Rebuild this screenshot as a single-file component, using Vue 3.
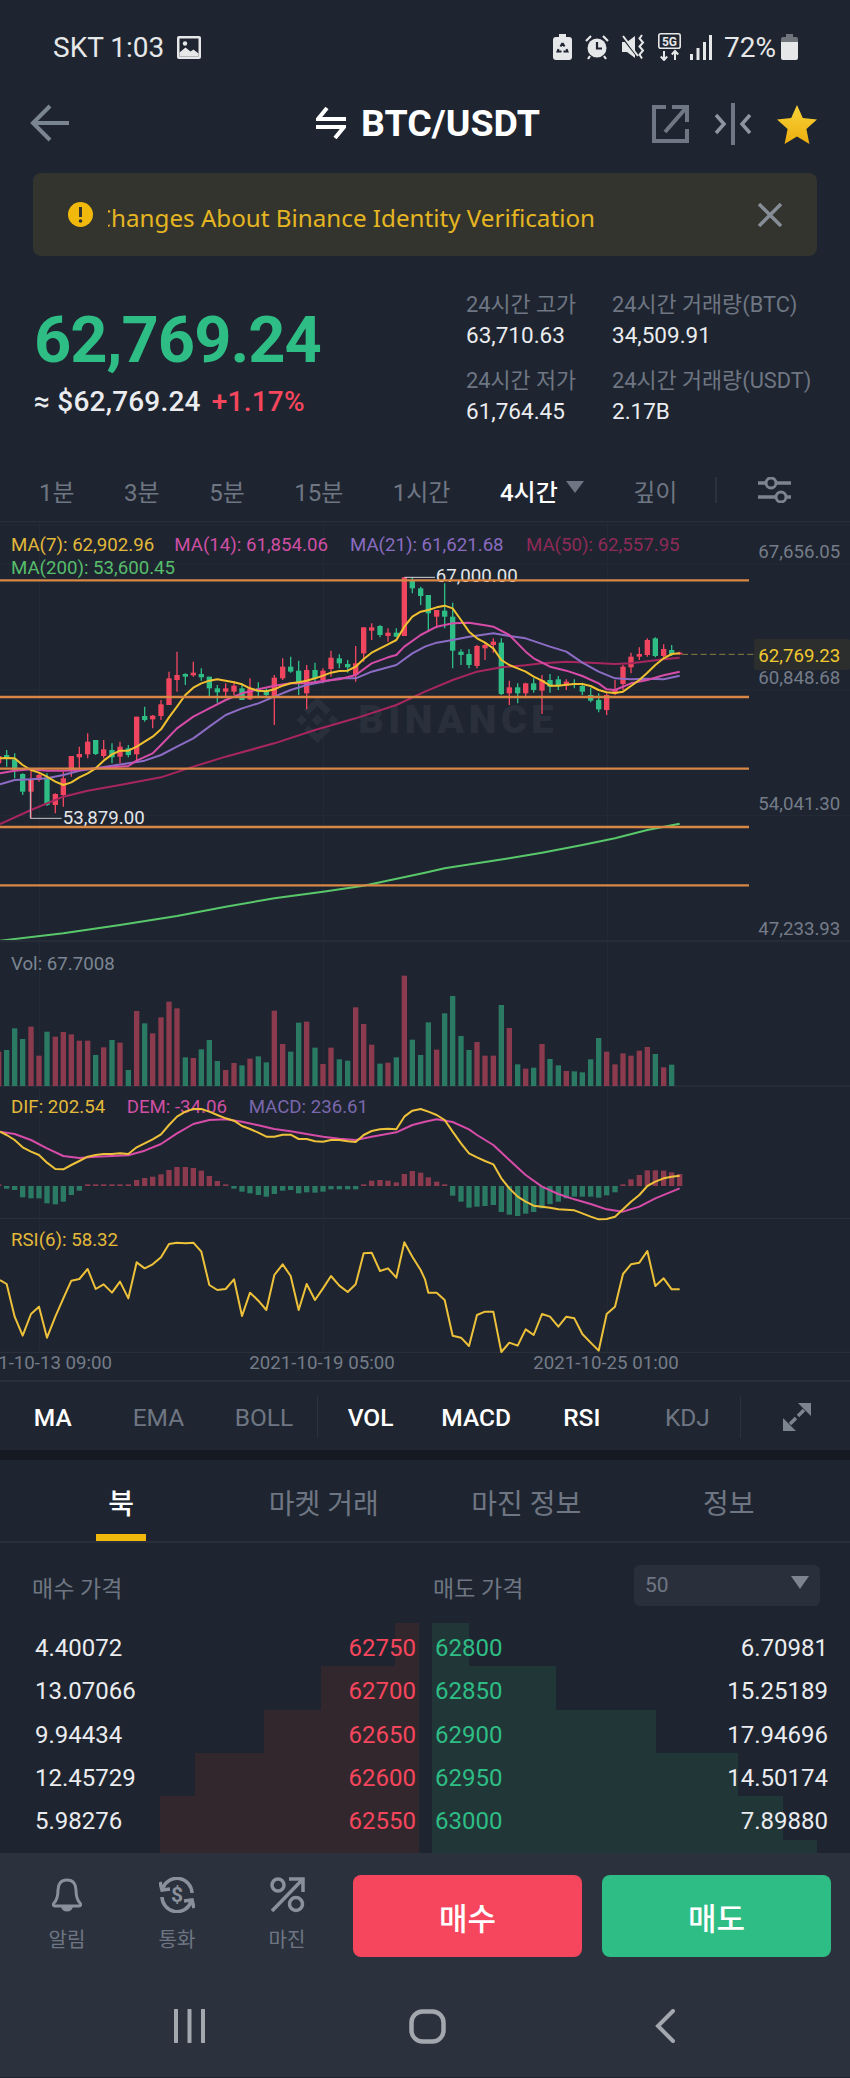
<script setup>
const off = 1275

// all chart coordinates are 3x screen pixels, a right-half x is stored minus 1275
const join = (left, right) => [...left, ...right.map(p => [p[0] + off, ...p.slice(1)])]
const line = pts => pts.map(p => p[0] + ',' + p[1]).join(' ')

const candles = join([
  [-4,700,740,708,730,'r'],[20,690,740,705,715,'g'],[44,700,775,718,750,'g'],[68,760,825,762,815,'g'],
  [93,750,895,780,815,'r'],[117,760,785,765,780,'r'],[141,760,858,772,855,'g'],[166,820,880,822,855,'r'],
  [190,755,860,775,825,'r'],[214,708,770,708,750,'r'],[238,680,745,702,712,'r'],[263,640,715,665,703,'r'],
  [287,660,705,660,702,'g'],[311,660,715,688,708,'r'],[336,670,730,690,712,'g'],[360,665,730,680,710,'r'],
  [385,675,712,685,705,'g'],[410,590,720,590,703,'r'],[434,560,605,588,600,'g'],[458,585,625,587,598,'r'],
  [483,540,600,553,588,'r'],[507,455,555,475,555,'r'],[531,395,515,465,480,'r'],[556,460,495,462,470,'g'],
  [580,425,470,458,466,'r'],[604,445,482,462,472,'g'],[628,470,530,470,505,'g'],[652,495,548,505,517,'g'],
  [677,490,530,505,515,'r'],[702,483,525,497,515,'r'],[726,490,540,505,540,'g'],[750,475,540,505,538,'r'],
  [775,487,530,505,515,'g'],[799,505,535,510,525,'g'],[823,465,615,473,530,'r'],[848,415,480,440,475,'r'],
  [872,410,458,440,455,'g'],[896,422,525,452,490,'g'],[920,435,568,450,520,'r'],[945,428,490,450,475,'g'],
  [969,445,490,452,480,'r'],[993,392,470,413,447,'r'],[1018,403,445,415,430,'g'],[1043,420,458,432,442,'g'],
  [1067,378,485,430,465,'r'],[1091,322,425,322,400,'r'],[1115,310,360,322,332,'r'],[1140,315,352,318,345,'g'],
  [1164,325,365,338,348,'r'],[1189,325,352,338,350,'g'],[1213,172,348,172,348,'r'],[1237,172,220,180,205,'g'],
  [1262,200,255,205,228,'g']
], [
  [10,225,335,225,280,'g'],[35,270,325,270,290,'r'],[59,190,325,272,290,'g'],[83,248,445,290,392,'g'],
  [108,388,435,395,405,'g'],[132,388,445,402,435,'g'],[156,375,445,378,438,'r'],[180,368,420,375,385,'r'],
  [205,355,398,365,375,'r'],[229,355,525,368,522,'g'],[253,482,555,502,520,'r'],[278,490,550,502,520,'g'],
  [302,488,535,490,520,'r'],[326,475,518,490,510,'g'],[351,465,582,480,512,'r'],[375,462,518,480,500,'g'],
  [400,468,510,478,497,'g'],[424,478,510,485,497,'r'],[448,478,505,490,495,'g'],[472,488,525,498,515,'g'],
  [497,503,547,525,542,'g'],[521,520,577,540,568,'g'],[545,520,585,525,570,'r'],[570,480,525,510,522,'r'],
  [594,435,510,440,492,'r'],[618,398,460,410,442,'r'],[643,382,420,402,410,'r'],[667,355,410,360,405,'r'],
  [691,352,412,355,408,'g'],[716,373,415,387,408,'r'],[740,375,408,390,402,'g'],[764,395,405,398,403,'r']
])

const ma7 = line(join([
  [0,715],[20,714],[44,715],[68,735],[93,750],[117,758],[141,770],[166,785],[190,795],[214,787],[238,772],[263,760],
  [287,745],[311,722],[336,703],[360,692],[385,692],[410,680],[434,665],[458,650],[483,628],[507,592],[531,560],
  [556,525],[580,503],[604,490],[628,482],[652,478],[677,482],[702,487],[726,493],[750,505],[775,512],[799,514],
  [823,508],[848,497],[872,490],[896,487],[920,482],[945,475],[969,467],[993,458],[1018,453],[1043,452],[1067,440],
  [1091,417],[1115,398],[1140,385],[1164,373],[1189,360],[1213,320],[1237,290],[1262,275]
], [
  [10,270],[35,262],[59,257],[83,265],[108,300],[132,335],[156,355],[180,368],[205,385],[229,420],[253,435],[278,445],
  [302,455],[326,470],[351,482],[375,497],[400,497],[424,494],[448,492],[472,492],[497,498],[521,510],[545,517],
  [570,519],[594,515],[618,498],[643,480],[667,458],[691,435],[716,415],[740,402],[764,400]
]))
const ma14 = line(join([
  [0,760],[44,752],[93,748],[141,752],[190,752],[238,750],[287,745],[336,742],[385,738],[410,722],[458,700],[483,675],
  [531,625],[580,590],[628,565],[677,540],[726,520],[775,508],[823,497],[872,490],[920,490],[969,483],[1018,478],
  [1067,465],[1115,430],[1164,412],[1189,405],[1213,380],[1262,345]
], [
  [35,320],[83,310],[132,308],[180,316],[205,320],[253,345],[302,395],[326,415],[375,440],[424,452],[472,468],[521,490],
  [545,508],[570,510],[618,490],[667,480],[716,466],[764,455]
]))
const ma21 = line(join([
  [0,793],[44,780],[93,778],[141,775],[190,765],[238,752],[287,745],[336,737],[385,730],[434,722],[483,705],[531,680],
  [580,655],[628,620],[677,585],[726,565],[775,550],[823,530],[872,510],[920,495],[969,485],[1018,475],[1067,475],
  [1115,455],[1189,435],[1237,400],[1275,380]
], [
  [35,368],[83,360],[132,350],[205,340],[253,348],[302,355],[375,380],[424,395],[472,428],[521,455],[570,475],[618,478],
  [667,476],[716,478],[764,467]
]))
const ma50 = line(join([
  [0,912],[93,870],[190,830],[263,812],[360,795],[483,772],[580,740],[677,710],[823,670],[945,630],[1067,595],[1189,555],
  [1275,515]
], [
  [83,480],[156,455],[229,442],[302,436],[351,430],[424,425],[497,428],[570,432],[618,430],[716,418],[764,413]
]))
const ma200 = line(join([
  [0,1262],[190,1240],[360,1215],[531,1188],[677,1160],[823,1135],[969,1115],[1091,1097],[1275,1058]
], [
  [59,1045],[156,1030],[253,1015],[351,998],[472,975],[570,955],[667,930],[764,911]
]))

const levels = [181, 531, 746, 921, 1096]
const gridA = [15, 132, 510, 886, 1263]
const axis = [
  { text: '67,656.05', y: 95 },
  { text: '60,848.68', y: 472 },
  { text: '54,041.30', y: 850 },
  { text: '47,233.93', y: 1225 }
]
const legend = [
  { text: 'MA(7): 62,902.96', x: 33, y: 72, color: '#e3b93a' },
  { text: 'MA(14): 61,854.06', x: 523, y: 72, color: '#cf4fa4' },
  { text: 'MA(21): 61,621.68', x: 1050, y: 72, color: '#8a6cc0' },
  { text: 'MA(50): 62,557.95', x: 1578, y: 72, color: '#8e2a58' },
  { text: 'MA(200): 53,600.45', x: 33, y: 142, color: '#57bd6b' }
]

// bar tops of the volume panel, bottom edge is 438
const vol = join([
  [-4,335,'r'],[20,330,'g'],[44,265,'g'],[68,297,'g'],[93,260,'r'],[117,347,'r'],[141,275,'g'],[166,290,'r'],[190,276,'r'],
  [214,283,'r'],[238,302,'r'],[263,302,'r'],[287,345,'g'],[311,322,'r'],[336,300,'g'],[360,308,'r'],[385,390,'g'],
  [410,213,'r'],[434,250,'g'],[458,280,'r'],[483,232,'r'],[507,185,'r'],[531,205,'r'],[556,352,'g'],[580,354,'r'],
  [604,328,'g'],[628,300,'g'],[652,363,'g'],[677,390,'r'],[702,369,'r'],[726,376,'g'],[750,356,'r'],[775,349,'g'],
  [799,367,'g'],[823,212,'r'],[848,312,'r'],[872,335,'g'],[896,248,'g'],[920,245,'r'],[945,323,'g'],[969,372,'r'],
  [993,323,'r'],[1018,358,'g'],[1043,362,'g'],[1067,202,'r'],[1091,252,'r'],[1115,314,'r'],[1140,371,'g'],[1164,368,'r'],
  [1189,352,'g'],[1213,107,'r'],[1237,299,'g'],[1262,345,'g']
], [
  [10,247,'g'],[35,329,'r'],[59,220,'g'],[83,168,'g'],[108,288,'g'],[132,330,'g'],[156,306,'r'],[180,347,'r'],[205,347,'r'],
  [229,195,'g'],[253,264,'r'],[278,373,'g'],[302,386,'r'],[326,383,'g'],[351,312,'r'],[375,357,'g'],[400,376,'g'],
  [424,393,'r'],[448,394,'g'],[472,397,'g'],[497,358,'g'],[521,294,'g'],[545,335,'r'],[570,373,'r'],[594,340,'r'],
  [618,347,'r'],[643,332,'r'],[667,321,'r'],[691,342,'g'],[716,382,'r'],[740,374,'g']
])

// far end of each histogram bar, zero line is 738
const hist = join([
  [-4,733],[20,746],[44,750],[68,772],[93,775],[117,775],[141,790],[166,793],[190,785],[214,765],[238,752],[263,733],
  [287,733],[311,733],[336,733],[360,733],[385,733],[410,720],[434,714],[458,710],[483,703],[507,690],[531,681],[556,681],
  [580,684],[604,692],[628,708],[652,723],[677,733],[702,746],[726,755],[750,760],[775,765],[799,770],[823,762],[848,752],
  [872,750],[896,760],[920,757],[945,758],[969,755],[993,748],[1018,748],[1043,748],[1067,748],[1091,733],[1115,722],
  [1140,720],[1164,722],[1189,727],[1213,702],[1237,693],[1262,698]
], [
  [10,712],[35,725],[59,733],[83,767],[108,785],[132,803],[156,800],[180,798],[205,795],[229,816],[253,824],[278,828],
  [302,821],[326,816],[351,805],[375,792],[400,785],[424,775],[448,770],[472,770],[497,770],[521,773],[545,766],[570,757],
  [594,733],[618,718],[643,705],[667,691],[691,691],[716,692],[740,697],[764,702]
])

const dif = line(join([
  [0,575],[20,585],[44,600],[68,622],[93,635],[117,645],[141,668],[166,687],[190,688],[214,675],[238,663],[263,650],
  [287,645],[311,642],[336,642],[360,640],[385,642],[410,622],[434,610],[458,598],[483,583],[507,555],[531,530],[556,515],
  [580,507],[604,507],[628,515],[652,525],[677,535],[702,542],[726,558],[750,567],[775,578],[799,590],[823,590],[848,584],
  [872,584],[896,597],[920,597],[945,604],[969,605],[993,600],[1018,600],[1043,604],[1067,606],[1091,585],[1115,573],
  [1140,568],[1164,566],[1189,568],[1213,530],[1237,512],[1262,507]
], [
  [10,515],[35,525],[59,540],[83,575],[108,610],[132,640],[156,652],[180,663],[205,673],[229,715],[253,745],[278,770],
  [302,785],[326,797],[351,800],[375,803],[400,808],[424,809],[448,811],[472,820],[497,830],[521,838],[545,837],[570,830],
  [594,808],[618,785],[643,765],[667,738],[691,725],[716,715],[740,710],[764,707]
]))
const dem = line(join([
  [0,575],[44,582],[93,600],[141,625],[190,648],[238,654],[287,650],[336,648],[385,646],[434,632],[483,612],[531,580],
  [580,552],[628,540],[677,538],[726,545],[775,556],[823,567],[872,574],[920,582],[969,590],[1018,596],[1067,600],
  [1115,590],[1189,577],[1237,555],[1275,545]
], [
  [35,538],[83,546],[132,568],[156,585],[205,615],[253,660],[302,705],[351,740],[400,762],[448,778],[497,792],[545,808],
  [594,815],[643,800],[691,775],[764,745]
]))
const rsi = line(join([
  [0,1020],[20,1032],[44,1130],[68,1187],[93,1122],[117,1100],[141,1193],[166,1130],[190,1075],[214,1022],[238,1017],
  [263,987],[287,1047],[311,1033],[336,1058],[360,1025],[385,1075],[410,967],[434,985],[458,973],[483,952],[507,912],
  [531,908],[556,910],[580,908],[604,935],[628,1035],[652,1050],[677,1047],[702,1018],[726,1128],[750,1058],[775,1082],
  [799,1110],[823,1005],[848,973],[872,1008],[896,1110],[920,1032],[945,1080],[969,1045],[993,1008],[1018,1037],
  [1043,1056],[1067,1033],[1091,940],[1115,938],[1140,993],[1164,985],[1189,1013],[1213,907],[1237,950],[1262,990]
], [
  [0,1018],[10,1058],[35,1058],[59,1080],[83,1187],[108,1193],[132,1218],[156,1125],[180,1115],[205,1115],[229,1236],
  [253,1208],[278,1217],[302,1168],[326,1185],[351,1122],[375,1130],[400,1160],[424,1130],[448,1135],[472,1182],
  [497,1208],[521,1232],[545,1122],[570,1100],[594,1002],[618,973],[643,968],[667,933],[691,1038],[716,1015],
  [740,1048],[764,1048]
]))

const gridX = [118, 970, 1822]
const stamps = [
  { text: '2021-10-13 09:00', x: 118 },
  { text: '2021-10-19 05:00', x: 966 },
  { text: '2021-10-25 01:00', x: 1818 }
]

const frames = ['1분', '3분', '5분', '15분', '1시간']
const indicatorsA = [
  { name: 'MA', on: true },
  { name: 'EMA', on: false },
  { name: 'BOLL', on: false }
]
const indicatorsB = [
  { name: 'VOL', on: true },
  { name: 'MACD', on: true },
  { name: 'RSI', on: true },
  { name: 'KDJ', on: false }
]
const tabs = ['북', '마켓 거래', '마진 정보', '정보']

const rows = [
  { bid: '4.40072', bidPrice: '62750', askPrice: '62800', ask: '6.70981', bidDepth: 24, askDepth: 37 },
  { bid: '13.07066', bidPrice: '62700', askPrice: '62850', ask: '15.25189', bidDepth: 98, askDepth: 124 },
  { bid: '9.94434', bidPrice: '62650', askPrice: '62900', ask: '17.94696', bidDepth: 155, askDepth: 224 },
  { bid: '12.45729', bidPrice: '62600', askPrice: '62950', ask: '14.50174', bidDepth: 224, askDepth: 306 },
  { bid: '5.98276', bidPrice: '62550', askPrice: '63000', ask: '7.89880', bidDepth: 259, askDepth: 351 },
  { bid: '', bidPrice: '', askPrice: '', ask: '', bidDepth: 259, askDepth: 385 }
]
</script>

<template>
  <div class="phone">
    <div class="status">
      <div class="status-left">
        <span>SKT 1:03</span>
        <svg width="24" height="23" viewBox="0 0 24 23">
          <rect width="24" height="23" rx="2" fill="#e6e7e8" />
          <rect x="2.5" y="2.5" width="19" height="18" fill="#1e2530" />
          <path d="M2.5 20.5v-4l6-5 5 4 3-2 5 4v3z" fill="#e6e7e8" />
          <circle cx="8" cy="7.5" r="2.2" fill="#e6e7e8" />
        </svg>
      </div>
      <div class="status-right">
        <svg class="s-recycle" width="19" height="26" viewBox="0 0 19 26">
          <path d="M6 0h7v3h3a3 3 0 0 1 3 3v17a3 3 0 0 1-3 3H3a3 3 0 0 1-3-3V6a3 3 0 0 1 3-3h3z" fill="#e6e7e8" />
          <path d="M9.5 9l2 3.4M9.5 9l-2 3.4M5.5 15l-1 2.5h4M13.5 15l1 2.5h-4" stroke="#1e2530" stroke-width="2" fill="none" />
        </svg>
        <svg class="s-alarm" width="26" height="26" viewBox="0 0 26 26">
          <circle cx="13" cy="14" r="9.5" fill="#e6e7e8" />
          <path d="M13 8v6.5h5" stroke="#1e2530" stroke-width="2.2" fill="none" />
          <path d="M2 7l5-5M24 7l-5-5M6 22l-2 3M20 22l2 3" stroke="#e6e7e8" stroke-width="2.2" fill="none" />
        </svg>
        <svg class="s-mute" width="25" height="26" viewBox="0 0 25 26">
          <path d="M1 8h5l8-6v22l-8-6H1z" fill="#e6e7e8" />
          <path d="M1 3l15 19" stroke="#1e2530" stroke-width="2" />
          <path d="M2 2l15 20" stroke="#e6e7e8" stroke-width="2" />
          <path d="M21 1l-2.500 3.500 3.500 4-3.500 4 3.500 4-3.500 4 2.500 4" stroke="#e6e7e8" stroke-width="2" fill="none" />
        </svg>
        <svg class="s-5g" width="23" height="28" viewBox="0 0 23 28">
          <rect x="0.800" y="0.800" width="21.400" height="14.400" rx="2" fill="none" stroke="#e6e7e8" stroke-width="1.600" />
          <text x="11.500" y="12.500" text-anchor="middle" class="s-5g-text">5G</text>
          <path d="M6 18v9M2.800 23.500L6 27l3.200-3.500M17 27v-9M13.800 21.500L17 18l3.200 3.500" stroke="#e6e7e8" stroke-width="2" fill="none" />
        </svg>
        <svg class="s-signal" width="22" height="25" viewBox="0 0 22 25">
          <rect x="0" y="19" width="3" height="6" fill="#e6e7e8" />
          <rect x="6.500" y="13" width="3" height="12" fill="#e6e7e8" />
          <rect x="13" y="7" width="3" height="18" fill="#e6e7e8" />
          <rect x="19" y="0" width="3" height="25" fill="#e6e7e8" />
        </svg>
        <span class="s-pct">72%</span>
        <svg width="17" height="26" viewBox="0 0 17 26">
          <path d="M5 0h7v3h3a2 2 0 0 1 2 2v3H0V5a2 2 0 0 1 2-2h3z" fill="#70757c" />
          <path d="M0 8h17v16a2 2 0 0 1-2 2H2a2 2 0 0 1-2-2z" fill="#e6e7e8" />
        </svg>
      </div>
    </div>

    <div class="nav">
      <svg class="back" width="40" height="38" viewBox="0 0 40 38">
        <path d="M39 19H3M20 2L3 19l17 17" stroke="#7a8591" stroke-width="4" fill="none" />
      </svg>
      <div class="pair">
        <svg width="30" height="32" viewBox="0 0 30 32">
          <path d="M30 12H2L11 1M0 20h28L19 31" stroke="#fff" stroke-width="4" fill="none" />
        </svg>
        <span>BTC/USDT</span>
      </div>
      <div class="nav-tools">
        <svg width="37" height="38" viewBox="0 0 37 38">
          <path d="M14 2H2v34h33V24M34 3L13 27M20 2h15v15" stroke="#6f7784" stroke-width="4" fill="none" />
        </svg>
        <svg class="split" width="38" height="42" viewBox="0 0 38 42">
          <path d="M19 0v42" stroke="#6f7784" stroke-width="4" />
          <path d="M2 12l8 9-8 9M36 12l-8 9 8 9" stroke="#8c95a1" stroke-width="3.500" fill="none" />
        </svg>
        <svg class="star" width="40" height="39" viewBox="0 0 40 39">
          <defs>
            <linearGradient id="starFill" x1="0" y1="0" x2="0" y2="1">
              <stop offset="0" stop-color="#f8d33a" />
              <stop offset="1" stop-color="#edae0d" />
            </linearGradient>
          </defs>
          <path d="M20 0l5.800 13 14.200 1.500-10.600 9.500 3 15L20 31.500 7.600 39l3-15L0 14.500 14.200 13z" fill="url(#starFill)" />
        </svg>
      </div>
    </div>

    <div class="notice">
      <svg width="25" height="25" viewBox="0 0 25 25">
        <circle cx="12.500" cy="12.500" r="12.500" fill="#f0b90b" />
        <path d="M12.500 5v10" stroke="#33342d" stroke-width="3" />
        <circle cx="12.500" cy="19" r="1.800" fill="#33342d" />
      </svg>
      <div class="notice-clip"><span>Changes About Binance Identity Verification</span></div>
      <svg class="notice-close" width="24" height="24" viewBox="0 0 24 24">
        <path d="M1 1l22 22M23 1L1 23" stroke="#868d96" stroke-width="3.500" />
      </svg>
    </div>

    <div class="ticker">
      <div class="ticker-main">
        <div class="price">62,769.24</div>
        <div class="fiat">≈ $62,769.24 <span>+1.17%</span></div>
      </div>
      <div class="stats">
        <div class="stat-label">24시간 고가</div>
        <div class="stat-label">24시간 거래량(BTC)</div>
        <div class="stat-value">63,710.63</div>
        <div class="stat-value">34,509.91</div>
        <div class="stat-label second">24시간 저가</div>
        <div class="stat-label second">24시간 거래량(USDT)</div>
        <div class="stat-value">61,764.45</div>
        <div class="stat-value">2.17B</div>
      </div>
    </div>

    <div class="frames">
      <span v-for="f in frames" :key="f">{{ f }}</span>
      <span class="frame-on">4시간<i class="frame-arrow"></i></span>
      <span>깊이</span>
      <b class="frame-div"></b>
      <svg width="33" height="26" viewBox="0 0 33 26">
        <path d="M0 6h33M0 20h33" stroke="#7c8490" stroke-width="3.500" />
        <circle cx="13" cy="6" r="5" fill="#1e2530" stroke="#7c8490" stroke-width="3" />
        <circle cx="23" cy="20" r="5" fill="#1e2530" stroke="#7c8490" stroke-width="3" />
      </svg>
    </div>

    <svg class="chart-a" width="850" height="420" viewBox="0 0 2550 1260">
      <line x1="0" y1="5" x2="2550" y2="5" stroke="#2a303b" stroke-width="4" />
      <line v-for="y in gridA" :key="y" x1="0" :y1="y" x2="2550" :y2="y" class="grid" />
      <line v-for="x in gridX" :key="x" :x1="x" y1="5" :x2="x" y2="1260" class="grid" />

      <g fill="#2a303b">
        <g transform="translate(952 600)">
          <path d="M0-70L40-30 26-16 0-42-26-16-40-30zM0 70L40 30 26 16 0 42-26 16-40 30zM0-17L17 0 0 17-17 0zM-47-15L-32 0-47 15-62 0zM47-15L62 0 47 15 32 0z" />
        </g>
        <text x="1075" y="640" class="mark" textLength="585">BINANCE</text>
      </g>

      <g v-for="c in candles" :key="c[0]" :fill="c[5] === 'r' ? '#f0455f' : '#2ebd85'" :stroke="c[5] === 'r' ? '#f0455f' : '#2ebd85'">
        <line :x1="c[0]" :y1="c[1]" :x2="c[0]" :y2="c[2]" stroke-width="4" />
        <rect :x="c[0] - 8" :y="c[3]" width="16" :height="c[4] - c[3]" stroke="none" />
      </g>

      <polyline :points="ma50" class="ma" stroke="#a8265f" />
      <polyline :points="ma21" class="ma" stroke="#8c6cc4" />
      <polyline :points="ma14" class="ma" stroke="#d64ca8" />
      <polyline :points="ma7" class="ma" stroke="#f0c030" />
      <polyline :points="ma200" class="ma" stroke="#58c86a" />

      <path d="M1213 172H1305" stroke="#d4d6da" stroke-width="3" fill="none" />
      <text x="1307" y="185" class="mark-price">67,000.00</text>
      <path d="M91 780V895H185" stroke="#c4c7cc" stroke-width="3" fill="none" />
      <text x="188" y="913" class="mark-price">53,879.00</text>

      <line v-for="y in levels" :key="y" x1="0" :y1="y" x2="2247" :y2="y" stroke="#d98744" stroke-width="7" />

      <text v-for="l in legend" :key="l.text" :x="l.x" :y="l.y + 20" :fill="l.color" class="chart-text">{{ l.text }}</text>
      <text v-for="a in axis" :key="a.text" x="2275" :y="a.y + 20" class="chart-text axis-text">{{ a.text }}</text>

      <line x1="2046" y1="403" x2="2262" y2="403" stroke="#8a7d3e" stroke-width="3" stroke-dasharray="18 10" />
      <rect x="2262" y="357" width="288" height="93" rx="6" fill="#2c2e2d" />
      <text x="2275" y="427" class="chart-text" fill="#f0c830">62,769.23</text>
    </svg>

    <svg class="chart-b" width="850" height="440" viewBox="0 0 2550 1320">
      <line x1="0" y1="3" x2="2550" y2="3" stroke="#2a303b" stroke-width="4" />
      <line x1="0" y1="438" x2="2550" y2="438" stroke="#2a303b" stroke-width="4" />
      <line x1="0" y1="835" x2="2550" y2="835" stroke="#2a303b" stroke-width="4" />
      <line x1="0" y1="1237" x2="2550" y2="1237" stroke="#2a303b" stroke-width="4" />
      <line v-for="x in gridX" :key="x" :x1="x" y1="3" :x2="x" y2="1237" class="grid" />

      <rect v-for="v in vol" :key="v[0]" :x="v[0] - 8" :y="v[1]" width="16" :height="438 - v[1]" :fill="v[2] === 'r' ? '#8c3a4d' : '#2a7a64'" />
      <rect
        v-for="h in hist"
        :key="h[0]"
        :x="h[0] - 8"
        :y="Math.min(h[1], 738)"
        width="16"
        :height="Math.abs(h[1] - 738)"
        :fill="h[1] < 738 ? '#8c3a4d' : '#2a7a64'"
      />

      <text x="33" y="90" class="chart-text" fill="#7d8594">Vol: 67.7008</text>
      <text x="33" y="520" class="chart-text" fill="#e3b93a">DIF: 202.54</text>
      <text x="380" y="520" class="chart-text" fill="#cf4fa4">DEM: -34.06</text>
      <text x="746" y="520" class="chart-text" fill="#7a67ad">MACD: 236.61</text>

      <polyline :points="dem" class="ma" stroke="#d64ca8" />
      <polyline :points="dif" class="ma" stroke="#eec13a" />

      <text x="33" y="918" class="chart-text" fill="#e3b93a">RSI(6): 58.32</text>
      <polyline :points="rsi" class="ma" stroke="#eec13a" />

      <text v-for="s in stamps" :key="s.text" :x="s.x" y="1287" class="chart-text stamp-text">{{ s.text }}</text>
    </svg>

    <div class="indicators">
      <span v-for="i in indicatorsA" :key="i.name" :class="{ on: i.on }">{{ i.name }}</span>
      <b class="ind-div"></b>
      <span v-for="i in indicatorsB" :key="i.name" :class="{ on: i.on }">{{ i.name }}</span>
      <b class="ind-div"></b>
      <svg class="expand" width="30" height="30" viewBox="0 0 30 30">
        <path d="M29 14V1H16ZM1 16v13h13Z" fill="#7c8490" />
        <path d="M22 8L16 14M8 22l6-6" stroke="#7c8490" stroke-width="3.500" />
      </svg>
    </div>
    <div class="strip"></div>

    <div class="tabs">
      <div v-for="(t, idx) in tabs" :key="t" class="tab" :class="{ active: idx === 0 }">{{ t }}</div>
    </div>

    <div class="book-head">
      <span class="book-bid">매수 가격</span>
      <span class="book-ask">매도 가격</span>
      <div class="select">
        <span>50</span>
        <i class="select-arrow"></i>
      </div>
    </div>

    <div class="book">
      <div v-for="(r, idx) in rows" :key="idx" class="row">
        <div class="half half-bid">
          <div class="depth depth-bid" :style="{ width: r.bidDepth + 'px' }"></div>
          <span class="qty">{{ r.bid }}</span>
          <span class="px-bid">{{ r.bidPrice }}</span>
        </div>
        <div class="half half-ask">
          <div class="depth depth-ask" :style="{ width: r.askDepth + 'px' }"></div>
          <span class="px-ask">{{ r.askPrice }}</span>
          <span class="qty">{{ r.ask }}</span>
        </div>
      </div>
    </div>

    <div class="bottom">
      <div class="actions">
        <div class="tool">
          <svg width="32" height="34" viewBox="0 0 32 34">
            <path d="M16 2c-6 0-9 4-9 10 0 6-1 10-4 13-1 1-1 3 1 3h24c2 0 2-2 1-3-3-3-4-7-4-13 0-6-3-10-9-10z" fill="none" stroke="#8a919c" stroke-width="3" />
            <path d="M10 28a6 5.500 0 0 0 12 0z" fill="#8a919c" />
          </svg>
          <span>알림</span>
        </div>
        <div class="tool">
          <svg width="36" height="36" viewBox="0 0 36 36">
            <path d="M4 11A15 15 0 0 1 33 16M32 25A15 15 0 0 1 3 20" fill="none" stroke="#8a919c" stroke-width="3.500" />
            <path d="M1 5L3 13L11 12M35 31L33 23L25 24" fill="none" stroke="#8a919c" stroke-width="3.500" />
            <text x="18" y="25" text-anchor="middle" class="dollar">$</text>
          </svg>
          <span>통화</span>
        </div>
        <div class="tool">
          <svg width="36" height="36" viewBox="0 0 36 36">
            <circle cx="9" cy="8" r="6" fill="none" stroke="#8a919c" stroke-width="3.500" />
            <circle cx="27" cy="27" r="6.500" fill="none" stroke="#8a919c" stroke-width="3.500" />
            <path d="M3 34L33 3M20 2h14v13" fill="none" stroke="#8a919c" stroke-width="3.500" />
          </svg>
          <span>마진</span>
        </div>
        <button class="trade buy">매수</button>
        <button class="trade sell">매도</button>
      </div>
      <div class="system">
        <div class="sys-cell">
          <svg width="33" height="34" viewBox="0 0 33 34">
            <path d="M3 1v32M16.500 1v32M30 1v32" stroke="#a3a8af" stroke-width="4" stroke-linecap="round" />
          </svg>
        </div>
        <div class="sys-cell">
          <svg width="37" height="35" viewBox="0 0 37 35">
            <rect x="2.500" y="2.500" width="32" height="30" rx="11" fill="none" stroke="#a3a8af" stroke-width="4.500" />
          </svg>
        </div>
        <div class="sys-cell">
          <svg width="20" height="34" viewBox="0 0 20 34">
            <path d="M18 2L3 17l15 15" fill="none" stroke="#a3a8af" stroke-width="4" stroke-linecap="round" />
          </svg>
        </div>
      </div>
    </div>
  </div>
</template>

<style>
html,
body {
  margin: 0;
  background: #1e2530;
}
</style>

<style scoped>
.phone {
  width: 850px;
  height: 2078px;
  overflow: hidden;
  background: #1e2530;
  color: #eaecef;
  font-family: Roboto, "Noto Sans CJK KR", sans-serif;
}

svg {
  display: block;
  flex: none;
}

.status {
  height: 94px;
  display: flex;
  align-items: center;
  justify-content: space-between;
  color: #e6e7e8;
  font-size: 28px;
}

.status-left {
  display: flex;
  align-items: center;
  gap: 13px;
  margin-left: 53px;
}

.status-right {
  display: flex;
  align-items: center;
  margin-right: 52px;
}

.s-recycle {
  margin-right: 12px;
}

.s-alarm {
  margin-right: 11px;
}

.s-mute {
  margin-right: 12px;
}

.s-5g {
  margin-right: 9px;
}

.s-5g-text {
  font-size: 12px;
  font-weight: 700;
  fill: #e6e7e8;
}

.s-signal {
  margin-right: 12px;
}

.s-pct {
  margin-right: 5px;
}

.nav {
  height: 58px;
  position: relative;
  display: flex;
  align-items: center;
  justify-content: center;
  margin-bottom: 21px;
}

.back {
  position: absolute;
  left: 30px;
  top: 10px;
}

.pair {
  display: flex;
  align-items: center;
  gap: 15px;
  font-size: 37.500px;
  font-weight: 700;
  color: #fff;
  margin-left: 6px;
}

.nav-tools {
  position: absolute;
  right: 33px;
  top: 9px;
  display: flex;
  align-items: center;
  gap: 25px;
}

.notice {
  height: 83px;
  margin: 0 33px;
  padding-left: 35px;
  background: #33342d;
  border-radius: 8px;
  display: flex;
  align-items: center;
  box-sizing: border-box;
  color: #e5b622;
}

.notice-clip {
  width: 487px;
  margin-left: 15px;
  overflow: hidden;
  white-space: nowrap;
  font-family: "Noto Sans", sans-serif;
  font-size: 24.200px;
  line-height: 34px;
  position: relative;
  top: 3px;
}

.notice-clip span {
  display: block;
  direction: rtl;
}

.notice-close {
  margin-left: auto;
  margin-right: 35px;
}

.ticker {
  height: 204px;
  display: flex;
}

.ticker-main {
  width: 466px;
  padding: 49px 0 0 34px;
  box-sizing: border-box;
}

.price {
  font-size: 65px;
  font-weight: 700;
  line-height: 70px;
  color: #2ebd85;
  letter-spacing: -1px;
}

.fiat {
  margin-top: 10px;
  font-size: 28px;
  font-weight: 500;
  line-height: 34px;
  letter-spacing: 0.200px;
  white-space: nowrap;
}

.fiat span {
  margin-left: 4px;
  color: #f6465d;
}

.stats {
  padding-top: 34px;
  display: grid;
  grid-template-columns: 146px 1fr;
  grid-auto-rows: 30px;
  font-size: 21.800px;
  line-height: 30px;
  white-space: nowrap;
}

.stat-label {
  color: #6f7683;
}

.stat-label.second {
  margin-top: 16px;
}

.stat-value {
  color: #eaecef;
  font-size: 22.500px;
}

.stat-value:nth-child(n + 7) {
  margin-top: 16px;
}

.frames {
  height: 60px;
  display: flex;
  align-items: center;
  gap: 49.500px;
  padding-left: 39px;
  font-size: 24px;
  color: #6f7683;
  white-space: nowrap;
}

.frame-on {
  display: flex;
  align-items: center;
  color: #fff;
  font-weight: 500;
}

.frame-arrow {
  width: 0;
  height: 0;
  margin: -6px 0 0 8px;
  border-left: 9px solid transparent;
  border-right: 9px solid transparent;
  border-top: 12px solid #6f7683;
}

.frame-div {
  width: 2px;
  height: 26px;
  margin: 0 -8px 0 -12px;
  background: #2d333e;
}

.grid {
  stroke: #262c37;
  stroke-width: 3;
}

.mark {
  font-size: 118px;
  font-weight: 900;
}

.ma {
  fill: none;
  stroke-width: 6;
  stroke-linejoin: round;
}

.mark-price {
  font-size: 56px;
  fill: #e4e6e9;
}

.chart-text {
  font-size: 56px;
}

.axis-text {
  fill: #757c89;
}

.stamp-text {
  fill: #757c89;
  text-anchor: middle;
}

.indicators {
  height: 70px;
  box-sizing: border-box;
  border-top: 2px solid #2a303b;
  background: #1f2631;
  display: flex;
  align-items: center;
  font-size: 24.500px;
  color: #6f7683;
  padding-top: 2px;
}

.indicators span {
  width: 105.600px;
  flex: none;
  text-align: center;
}

.indicators span.on {
  color: #fff;
  font-weight: 500;
}

.ind-div {
  width: 1px;
  height: 42px;
  flex: none;
  background: #2d333e;
}

.expand {
  margin-left: 41px;
}

.strip {
  height: 10px;
  background: #151a22;
}

.tabs {
  height: 83px;
  box-sizing: border-box;
  border-bottom: 2px solid #2a303b;
  padding: 0 20px;
  display: grid;
  grid-template-columns: repeat(4, 1fr);
  font-size: 28px;
  color: #6f7683;
}

.tab {
  position: relative;
  display: flex;
  align-items: center;
  justify-content: center;
  padding-top: 2px;
}

.tab.active {
  color: #fff;
  font-weight: 500;
}

.tab.active::after {
  content: "";
  position: absolute;
  left: 50%;
  bottom: 0;
  width: 50px;
  height: 7px;
  margin-left: -25px;
  background: #f0b90b;
}

.book-head {
  height: 80px;
  display: flex;
  align-items: center;
  font-size: 23px;
  color: #6f7683;
  padding-top: 8px;
  box-sizing: border-box;
}

.book-bid {
  width: 401px;
  margin-left: 32px;
}

.book-ask {
  width: 201px;
}

.select {
  width: 186px;
  height: 41px;
  box-sizing: border-box;
  padding: 0 11px;
  background: #2a303b;
  border-radius: 6px;
  display: flex;
  align-items: center;
  justify-content: space-between;
  font-size: 21px;
  margin-top: -4px;
}

.select-arrow {
  width: 0;
  height: 0;
  margin-top: -6px;
  border-left: 9px solid transparent;
  border-right: 9px solid transparent;
  border-top: 13px solid #7c8490;
}

.book {
  height: 230px;
  overflow: hidden;
  font-size: 24px;
}

.row {
  height: 43.330px;
  display: grid;
  grid-template-columns: 419px 398px;
  column-gap: 13px;
}

.half {
  position: relative;
  display: flex;
  align-items: center;
  justify-content: space-between;
  line-height: 43px;
}

.half span {
  position: relative;
  top: 4px;
}

.half-bid {
  padding: 0 3px 0 35px;
}

.half-ask {
  padding: 0 2px 0 3px;
}

.depth {
  position: absolute;
  top: 0;
  bottom: 0;
}

.depth-bid {
  right: 0;
  background: #33272e;
}

.depth-ask {
  left: 0;
  background: #213637;
}

.px-bid {
  color: #f6465d;
}

.px-ask {
  color: #2ebd85;
}

.bottom {
  height: 224px;
  background: #2b323e;
  box-sizing: border-box;
  padding-top: 22px;
}

.actions {
  display: flex;
  height: 82px;
  padding-left: 12px;
}

.tool {
  width: 110px;
  flex: none;
  display: flex;
  flex-direction: column;
  align-items: center;
  font-size: 20px;
  line-height: 28px;
  color: #6f7683;
  gap: 13px;
  padding-top: 2px;
}

.tool svg {
  height: 36px;
}

.dollar {
  font-size: 21px;
  font-weight: 700;
  fill: #8a919c;
}

.trade {
  width: 229px;
  height: 82px;
  border: none;
  border-radius: 8px;
  color: #fff;
  font-family: inherit;
  font-size: 31px;
  font-weight: 500;
  padding: 0;
}

.buy {
  margin-left: 11px;
  background: #f6465d;
}

.sell {
  margin-left: 20px;
  background: #2ebd85;
}

.system {
  margin-top: 52px;
  padding-left: 71px;
  display: flex;
}

.sys-cell {
  width: 237.500px;
  display: flex;
  justify-content: center;
}
</style>
